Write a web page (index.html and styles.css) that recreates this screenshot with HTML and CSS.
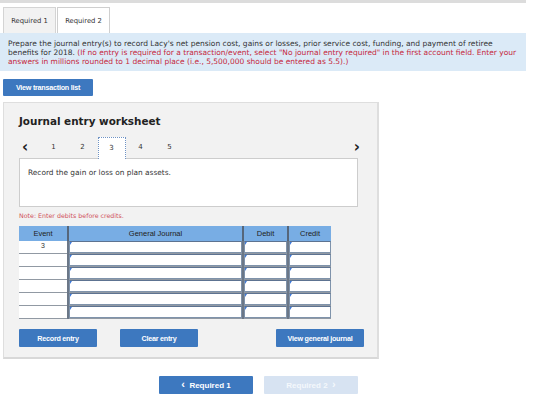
FILE: index.html
```html
<!DOCTYPE html>
<html lang="en">
<head>
    <meta charset="UTF-8">
    <title>Journal Entry Worksheet</title>
    <link rel="stylesheet" href="styles.css">
</head>
<body>
    <div class="page">
        <div class="topbar"></div>
        <div class="tabs">
            <div class="tab">Required 1</div>
            <div class="tab active">Required 2</div>
        </div>
        <div class="instructions">
            Prepare the journal entry(s) to record Lacy's net pension cost, gains or losses, prior service cost, funding, and payment of retiree benefits for 2018.
            <span class="red">(If no entry is required for a transaction/event, select "No journal entry required" in the first account field. Enter your answers in millions rounded to 1 decimal place (i.e., 5,500,000 should be entered as 5.5).)</span>
        </div>
        <button class="btn list-btn">View transaction list</button>

        <div class="worksheet">
            <h2 class="ws-title">Journal entry worksheet</h2>
            <div class="ws-nav">
                <span class="arrow">&lsaquo;</span>
                <span class="step">1</span>
                <span class="step">2</span>
                <span class="step current">3</span>
                <span class="step">4</span>
                <span class="step">5</span>
                <span class="arrow right">&rsaquo;</span>
            </div>
            <div class="ws-task">Record the gain or loss on plan assets.</div>
            <div class="note">Note: Enter debits before credits.</div>

            <table class="journal">
                <thead>
                    <tr>
                        <th class="c-event">Event</th>
                        <th class="c-account">General Journal</th>
                        <th class="c-debit">Debit</th>
                        <th class="c-credit">Credit</th>
                    </tr>
                </thead>
                <tbody>
                    <tr><td class="c-event">3</td><td><div class="field"></div></td><td><div class="field"></div></td><td><div class="field"></div></td></tr>
                    <tr><td class="c-event"></td><td><div class="field"></div></td><td><div class="field"></div></td><td><div class="field"></div></td></tr>
                    <tr><td class="c-event"></td><td><div class="field"></div></td><td><div class="field"></div></td><td><div class="field"></div></td></tr>
                    <tr><td class="c-event"></td><td><div class="field"></div></td><td><div class="field"></div></td><td><div class="field"></div></td></tr>
                    <tr><td class="c-event"></td><td><div class="field"></div></td><td><div class="field"></div></td><td><div class="field"></div></td></tr>
                    <tr><td class="c-event"></td><td><div class="field"></div></td><td><div class="field"></div></td><td><div class="field"></div></td></tr>
                </tbody>
            </table>

            <div class="ws-actions">
                <button class="btn act">Record entry</button>
                <button class="btn act">Clear entry</button>
                <button class="btn act wide">View general journal</button>
            </div>
        </div>

        <div class="pager">
            <button class="btn page-btn"><span class="chev">&lsaquo;</span>&nbsp;&nbsp;Required 1</button>
            <button class="btn page-btn disabled">Required 2&nbsp;&nbsp;<span class="chev">&rsaquo;</span></button>
        </div>
    </div>
</body>
</html>
```

FILE: styles.css
```css
body {
    margin: 0;
    background-color: #fff;
    font-family: "DejaVu Sans", Verdana, sans-serif;
    color: #333;
}
.page {
    width: 526px;
}
.topbar {
    height: 3px;
    background-color: #dcdcdc;
}
.tabs {
    display: flex;
    padding: 4px 0 0 3px;
}
.tab {
    width: 53px;
    height: 26px;
    box-sizing: border-box;
    display: flex;
    justify-content: center;
    align-items: center;
    font-size: 6.8px;
    color: #333;
    background-color: #f2f2f2;
    border: 1px solid #d4d4d4;
    border-bottom: none;
}
.tab.active {
    background-color: #fff;
    border: 1px solid #cfcfcf;
    border-bottom: none;
    margin-left: 1px;
}
.instructions {
    background-color: #dbeaf7;
    padding: 6px 9px 5px 8px;
    font-size: 7.5px;
    line-height: 9px;
    color: #333;
}
.red {
    color: #c5283d;
}
.btn {
    border: none;
    border-radius: 1px;
    background-color: #3d78bf;
    color: #fff;
    font-family: "Liberation Sans", Arial, sans-serif;
    font-weight: bold;
    font-size: 7.2px;
    letter-spacing: -0.25px;
    cursor: pointer;
    padding: 0;
}
.list-btn {
    display: block;
    width: 90px;
    height: 17px;
    margin: 8px 0 6px 3px;
}
.worksheet {
    margin-left: 3px;
    width: 376px;
    height: 257px;
    box-sizing: border-box;
    background-color: #f2f2f2;
    border: 1px solid #dedede;
    border-right: 2px solid #dedede;
    border-bottom: 2px solid #d8d8d8;
    padding: 0 0 0 15px;
}
.ws-title {
    margin: 12px 0 0 0;
    font-size: 10.4px;
    line-height: 12px;
    font-weight: bold;
    color: #222;
}
.ws-nav {
    display: flex;
    align-items: center;
    height: 22px;
    margin-top: 9px;
    width: 341px;
    font-size: 7px;
}
.arrow {
    font-size: 15px;
    font-weight: bold;
    color: #222;
    width: 17px;
    padding-left: 3px;
    line-height: 12px;
}
.arrow.right {
    margin-left: auto;
    width: auto;
    padding-left: 0;
}
.step {
    width: 29px;
    text-align: center;
    color: #333;
}
.step.current {
    width: 28px;
    height: 22px;
    margin: 0 0.5px;
    box-sizing: border-box;
    line-height: 20px;
    background-color: #fff;
    border: 1px dotted #6f93c4;
    border-bottom: none;
    position: relative;
    top: 1px;
}
.ws-task {
    width: 339px;
    height: 49px;
    box-sizing: border-box;
    background-color: #fff;
    border: 1px solid #cdcdcd;
    padding: 9px 8px;
    font-size: 7.4px;
    color: #333;
}
.note {
    margin-top: 4px;
    font-size: 6.3px;
    line-height: 9px;
    color: #d0505a;
}
.journal {
    margin-top: 6px;
    border-collapse: collapse;
    width: 306px;
    table-layout: fixed;
    font-family: "Liberation Sans", Arial, sans-serif;
}
.journal th {
    height: 15px;
    padding: 0;
    background-color: #78ade4;
    font-size: 7.5px;
    font-weight: normal;
    color: #222;
    border-left: 2px solid #56667a;
}
.journal th.c-event {
    border-left: none;
}
.c-event { width: 48px; }
.c-account { width: 173px; }
.c-debit { width: 43px; }
.c-credit { width: 42px; }
.journal td {
    height: 12px;
    padding: 0;
    border-bottom: 1px solid #9199a3;
    border-left: 2px solid #6b7787;
    background-color: #fff;
}
.journal td.c-event {
    border-left: none;
    text-align: center;
    vertical-align: top;
    font-size: 7px;
    color: #333;
    line-height: 10px;
}
.field {
    height: 12px;
    box-sizing: border-box;
    border: 1px solid #7f93ab;
    border-top-color: #5d7391;
    background-color: #fff;
    position: relative;
}
.field::before {
    content: "";
    position: absolute;
    left: 0;
    top: 0;
    border-top: 3px solid #3d78d8;
    border-right: 2px solid transparent;
}
.ws-actions {
    display: flex;
    margin-top: 10px;
    width: 345px;
}
.btn.act {
    width: 78px;
    height: 18px;
    margin-right: 23px;
}
.btn.act.wide {
    width: 88px;
    margin-left: auto;
    margin-right: 0;
}
.pager {
    display: flex;
    gap: 11px;
    margin: 17px 0 0 159px;
}
.page-btn {
    width: 94px;
    height: 18px;
    font-size: 8px;
    letter-spacing: 0;
}
.chev {
    font-size: 11px;
    line-height: 8px;
}
.page-btn.disabled {
    background-color: #d7e3f2;
    color: #f4f8fc;
}
```
